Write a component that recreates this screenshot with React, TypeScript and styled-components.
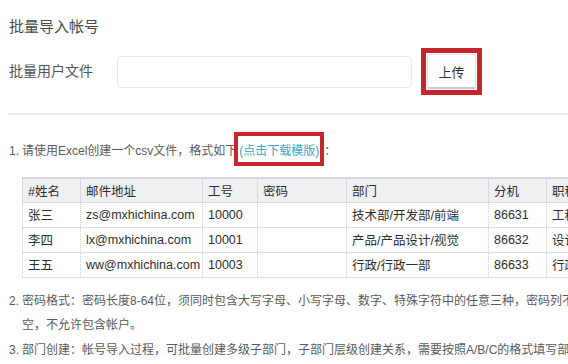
import React from 'react'
import styled, { createGlobalStyle } from 'styled-components'

const GlobalStyle = createGlobalStyle`
    html, body {
        margin: 0;
        padding: 0;
        background: #fff;
        overflow: hidden;
    }
    body {
        font-family: "Liberation Sans", "Noto Sans CJK SC", sans-serif;
    }
`

const Page = styled.div`
    width: 640px;
    padding-left: 9px;
    color: #555;
`

const Title = styled.div`
    margin-top: 17px;
    font-size: 15px;
    line-height: 20px;
    color: #4a4a4a;
`

const UploadRow = styled.div`
    display: flex;
    align-items: center;
    margin-top: 11px;
    height: 47px;
`

const Label = styled.div`
    width: 108px;
    font-size: 14px;
    color: #555;
    margin-top: -4px;
`

const FileInput = styled.div`
    width: 293px;
    height: 30px;
    border: 1px solid #e8e8e8;
    border-radius: 4px;
    background: #fff;
`

const Marker = styled.span<{$pad: string}>`
    display: inline-flex;
    border: 5px solid #c4262b;
    padding: ${props => props.$pad};
`

const UploadBtn = styled.button`
    width: 49px;
    height: 35px;
    background: #fff;
    border: 1px solid #e2e2e2;
    border-bottom: 2px solid #c9ccd0;
    border-radius: 2px;
    font-family: "Liberation Sans", "Noto Sans CJK SC", sans-serif;
    font-size: 13px;
    color: #333;
    padding: 0;
`

const Divider = styled.div`
    margin-top: 18px;
    margin-left: -1px;
    height: 2px;
    background: #ececec;
`

const Item = styled.div<{$top: number}>`
    display: flex;
    align-items: baseline;
    margin-top: ${props => props.$top}px;
    font-size: 12px;
    line-height: 24.5px;
    white-space: nowrap;
    color: #5a5a5a;
`

const Num = styled.span`
    width: 13px;
    flex-shrink: 0;
`

const Link = styled.span`
    color: #3aa6c6;
    line-height: 16px;
`

const LinkMarker = styled.span`
    display: inline-block;
    border: 4px solid #c4262b;
    padding: 7px 1px 3px;
    margin-left: -3px;
    line-height: 16px;
`

const Table = styled.table`
    margin-top: 11px;
    margin-left: 13px;
    border-collapse: collapse;
    table-layout: fixed;
    width: 640px;
    font-size: 12.5px;
    color: #2e2e2e;
    border-top: 2px solid #d4d6d9;
    border-bottom: 1px solid #d4d6d9;
`

const Th = styled.th<{$w: number}>`
    box-sizing: border-box;
    width: ${props => props.$w}px;
    height: 24px;
    padding: 0 5px;
    text-align: left;
    font-weight: normal;
    background: #eef0f2;
    border-left: 1px solid #d8dadd;
    border-bottom: 1px solid #d8dadd;
    white-space: nowrap;
    overflow: hidden;
`

const Td = styled.td`
    box-sizing: border-box;
    height: 25px;
    padding: 0 5px;
    border-left: 1px dotted #cfd2d6;
    border-bottom: 1px solid #dcdee1;
    white-space: nowrap;
    overflow: hidden;
`

const columns = [
    { name: '#姓名', width: 58 },
    { name: '邮件地址', width: 122 },
    { name: '工号', width: 55 },
    { name: '密码', width: 89 },
    { name: '部门', width: 142 },
    { name: '分机', width: 58 },
    { name: '职称', width: 116 },
]

const rows = [
    ['张三', 'zs@mxhichina.com', '10000', '', '技术部/开发部/前端', '86631', '工程师'],
    ['李四', 'lx@mxhichina.com', '10001', '', '产品/产品设计/视觉', '86632', '设计师'],
    ['王五', 'ww@mxhichina.com', '10003', '', '行政/行政一部', '86633', '行政'],
]

const App = () => {
    return (
        <Page>
            <GlobalStyle />
            <Title>批量导入帐号</Title>

            <UploadRow>
                <Label>批量用户文件</Label>
                <FileInput />
                <Marker $pad="1px" style={{ marginLeft: 9 }}>
                    <UploadBtn>上传</UploadBtn>
                </Marker>
            </UploadRow>

            <Divider />

            <Item $top={17}>
                <Num>1.</Num>
                <span>请使用Excel创建一个csv文件，格式如下</span>
                <LinkMarker>
                    <Link>(点击下载模版)</Link>
                </LinkMarker>
                <span>：</span>
            </Item>

            <Table>
                <thead>
                    <tr>
                        {columns.map(c => <Th key={c.name} $w={c.width}>{c.name}</Th>)}
                    </tr>
                </thead>
                <tbody>
                    {rows.map(r => (
                        <tr key={r[0]}>
                            {r.map((cell, i) => <Td key={i}>{cell}</Td>)}
                        </tr>
                    ))}
                </tbody>
            </Table>

            <Item $top={11}>
                <Num>2.</Num>
                <span>
                    密码格式：密码长度8-64位，须同时包含大写字母、小写字母、数字、特殊字符中的任意三种，密码列不能为<br />
                    空，不允许包含帐户。
                </span>
            </Item>
            <Item $top={0}>
                <Num>3.</Num>
                <span>部门创建：帐号导入过程，可批量创建多级子部门，子部门层级创建关系，需要按照A/B/C的格式填写部门名称。</span>
            </Item>
        </Page>
    )
}

export default App
